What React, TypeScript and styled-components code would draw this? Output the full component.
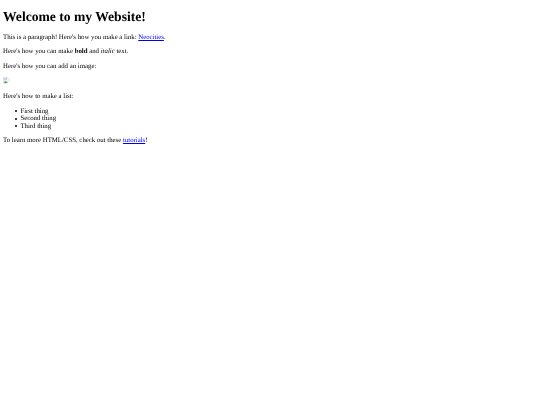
import React from "react";
import styled, { createGlobalStyle } from "styled-components";

const Global = createGlobalStyle`
  html, body { margin: 0; padding: 0; background: #fff; }
`;
const Page = styled.main`
  padding: 0 3px;
  display: flow-root;
  color: #000;
  font-family: "Liberation Serif", "Times New Roman", serif;
  font-size: 6.8px;
  line-height: 7.5px;
  text-rendering: geometricPrecision;
  filter: blur(0.25px);
`;
const Title = styled.h1`
  margin: 9.1px 0;
  font-size: 13.6px;
  line-height: 15.7px;
  font-weight: 700;
`;
const Para = styled.p`
  margin: 6.9px 0;
`;
const Anchor = styled.a`
  color: #0000ee;
  text-decoration: underline;
  text-decoration-thickness: 0.4px;
`;
const BrokenIcon = styled.svg`
  display: inline-block;
  width: 6.8px;
  height: 6.8px;
`;
const List = styled.ul`
  margin: 6.9px 0;
  padding: 0 0 0 11.5px;
  list-style: none;
`;
const Item = styled.li`
  display: flex;
  align-items: center;
  gap: 3.7px;
  &::before {
    content: "";
    width: 2.2px;
    height: 2.2px;
    border-radius: 50%;
    background: #000;
  }
`;

function Broken() {
  return (
    <BrokenIcon viewBox="0 0 16 16" role="img" aria-label="broken image">
      <path d="M1 1h10l4 4v3l-4 4-2 3H1z" fill="#fff" stroke="#b4b4b4" />
      <path d="M2 2h8v6H2z" fill="#c3d3ee" />
      <path d="M2 14l3-5 3 2 2-1 1 2-2 2z" fill="#57a957" />
    </BrokenIcon>
  );
}

export default function App() {
  return (
    <>
      <Global />
      <Page>
        <Title>Welcome to my Website!</Title>
        <Para>This is a paragraph! Here's how you make a link: <Anchor href="#">Neocities</Anchor>.</Para>
        <Para>Here's how you can make <b>bold</b> and <i>italic</i> text.</Para>
        <Para>Here's how you can add an image:</Para>
        <Para><Broken /></Para>
        <Para>Here's how to make a list:</Para>
        <List>
          <Item>First thing</Item>
          <Item>Second thing</Item>
          <Item>Third thing</Item>
        </List>
        <Para>To learn more HTML/CSS, check out these <Anchor href="#">tutorials</Anchor>!</Para>
      </Page>
    </>
  );
}
